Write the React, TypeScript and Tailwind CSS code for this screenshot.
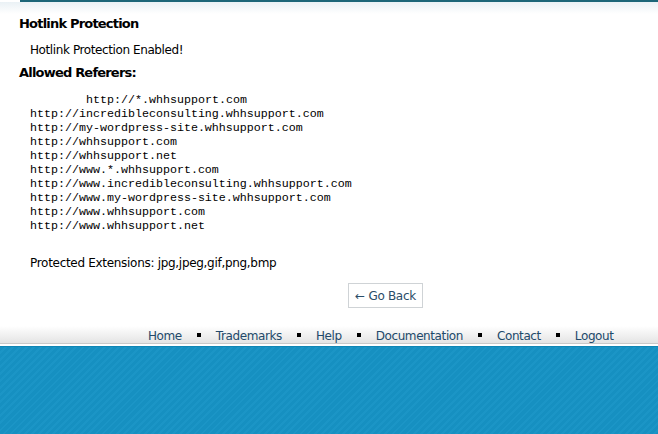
import React from 'react';

const referers = [
  'http://incredibleconsulting.whhsupport.com',
  'http://my-wordpress-site.whhsupport.com',
  'http://whhsupport.com',
  'http://whhsupport.net',
  'http://www.*.whhsupport.com',
  'http://www.incredibleconsulting.whhsupport.com',
  'http://www.my-wordpress-site.whhsupport.com',
  'http://www.whhsupport.com',
  'http://www.whhsupport.net',
];

const navLinks = ['Home', 'Trademarks', 'Help', 'Documentation', 'Contact', 'Logout'];

const App: React.FC = () => {
  return (
    <div className="w-[658px] h-[434px] overflow-hidden bg-white flex flex-col font-['DejaVu_Sans',Verdana,sans-serif] text-black">
      {/* top strip */}
      <div className="ml-[20px] h-[2px] bg-[#1d6678]" />
      <div className="h-[12px] bg-gradient-to-b from-[#eaf1f5] to-white" />

      <div className="pl-[19px] flex flex-col">
        <h2 className="mt-[2px] text-[13px] leading-[16px] font-bold tracking-[-0.8px]">Hotlink Protection</h2>
        <p className="mt-[10px] pl-[11px] text-[12px] leading-[16px] tracking-[-0.4px]">Hotlink Protection Enabled!</p>
        <h3 className="mt-[7px] text-[13px] leading-[16px] font-bold tracking-[-0.8px]">Allowed Referers:</h3>
        <div className="mt-[12px] pl-[11px] font-['Liberation_Mono','Courier_New',monospace] text-[11.67px] leading-[14px] whitespace-pre">
          <div className="pl-[56px]">http://*.whhsupport.com</div>
          {referers.map((r) => (
            <div key={r}>{r}</div>
          ))}
        </div>
        <p className="mt-[22px] pl-[11px] text-[12px] leading-[16px] tracking-[-0.3px]">
          Protected Extensions: jpg,jpeg,gif,png,bmp
        </p>
      </div>

      <div className="mt-[12px] pl-[348px]">
        <button className="w-[75px] h-[25px] border border-[#cfd3d6] bg-white text-[12px] tracking-[-0.3px] text-[#2a4d68] flex items-center justify-center">
          ← Go Back
        </button>
      </div>

      {/* footer nav */}
      <div className="mt-[18px] h-[17px] bg-gradient-to-b from-white to-[#e4e4e4] flex items-center pt-[4px] pl-[148px] text-[12px] leading-[15px] tracking-[-0.4px] text-[#22496a]">
        {navLinks.map((l, i) => (
          <React.Fragment key={l}>
            {i > 0 && <span className="mx-[15px] mb-[3px] w-[4px] h-[4px] bg-black" />}
            <span>{l}</span>
          </React.Fragment>
        ))}
      </div>
      <div className="h-[1px] bg-[#c9c9c9]" />
      <div className="h-[2px] bg-white" />
      <div className="flex-1 border-t border-[#0f86b5] bg-[#1690c1] bg-[repeating-linear-gradient(135deg,#1690c1_0px,#1690c1_3px,#1b95c6_3px,#1b95c6_5px)]" />
    </div>
  );
};

export default App;
